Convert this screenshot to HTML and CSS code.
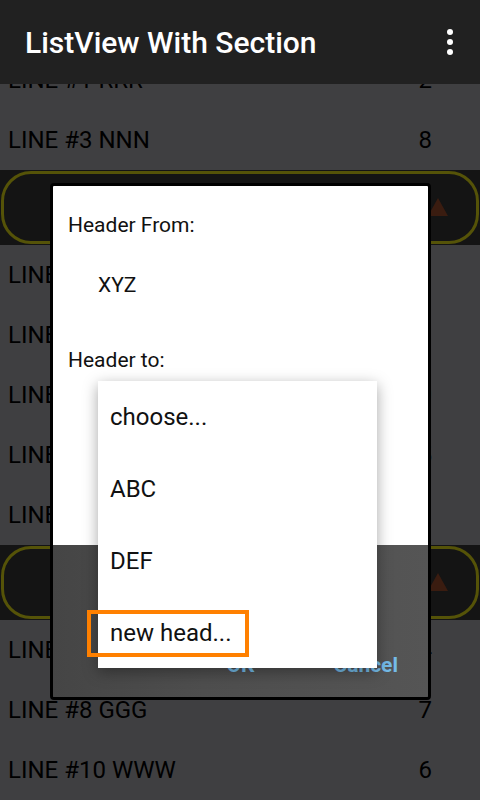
FILE: index.html
```html
<!DOCTYPE html>
<html>
<head>
<meta charset="utf-8">
<link rel="stylesheet" href="styles.css">
</head>
<body>
<div class="screen">
  <header class="appbar">
    <div class="title">ListView With Section</div>
    <div class="overflow"><span></span><span></span><span></span></div>
  </header>
  <div class="list">
    <div class="list-inner">
      <div class="row"><span>LINE #1 RRR</span><span>2</span></div>
      <div class="row"><span>LINE #3 NNN</span><span>8</span></div>
      <div class="section"><div class="pill"><span class="tri"></span></div></div>
      <div class="row"><span>LINE #2 AAA</span><span>1</span></div>
      <div class="row"><span>LINE #4 BBB</span><span>3</span></div>
      <div class="row"><span>LINE #5 CCC</span><span>0</span></div>
      <div class="row"><span>LINE #6 DDD</span><span>5</span></div>
      <div class="row"><span>LINE #9 EEE</span><span>3</span></div>
      <div class="section"><div class="pill"><span class="tri"></span></div></div>
      <div class="row"><span>LINE #7 FFF</span><span>4</span></div>
      <div class="row"><span>LINE #8 GGG</span><span>7</span></div>
      <div class="row"><span>LINE #10 WWW</span><span>6</span></div>
    </div>
  </div>

  <div class="dialog">
    <div class="dialog-body">
      <div class="label first">Header From:</div>
      <div class="value">XYZ</div>
      <div class="label second">Header to:</div>
    </div>
    <div class="dialog-buttons">
      <span class="btn">OK</span>
      <span class="btn">Cancel</span>
    </div>
  </div>

  <div class="popup">
    <div class="item">choose...</div>
    <div class="item">ABC</div>
    <div class="item">DEF</div>
    <div class="item">new head...</div>
  </div>
  <div class="focus-ring"></div>
</div>
</body>
</html>
```

FILE: styles.css
```css
* { box-sizing: border-box; }
html, body {
  margin: 0;
  padding: 0;
  width: 480px;
  height: 800px;
  overflow: hidden;
  font-family: Roboto, "Noto Sans", sans-serif;
}
.screen {
  position: relative;
  width: 480px;
  height: 800px;
  background: #3f3f41;
  display: flex;
  flex-direction: column;
}
.appbar {
  position: relative;
  z-index: 2;
  height: 84px;
  flex: none;
  background: #212121;
  display: flex;
  align-items: center;
  justify-content: space-between;
  padding: 0 27px 0 25px;
}
.title {
  color: #fff;
  font-size: 30px;
  font-weight: 500;
  line-height: 1;
  padding-top: 2px;
}
.overflow {
  display: flex;
  flex-direction: column;
  gap: 4px;
  align-items: center;
}
.overflow span {
  width: 6px;
  height: 6px;
  border-radius: 50%;
  background: #fff;
}
.list {
  flex: 1;
  overflow: hidden;
}
.list-inner {
  margin-top: -34px;
}
.row {
  height: 60px;
  display: flex;
  align-items: center;
  justify-content: space-between;
  padding: 0 48px 0 8px;
  font-size: 24px;
  color: #000;
}
.section {
  height: 75px;
  background: #141414;
  padding: 1px;
}
.pill {
  height: 100%;
  border: 3px solid #555308;
  border-radius: 30px;
  display: flex;
  align-items: center;
  justify-content: flex-end;
  padding-right: 28px;
}
.tri {
  width: 0;
  height: 0;
  border-left: 10px solid transparent;
  border-right: 10px solid transparent;
  border-bottom: 18px solid #3a1c10;
  margin-top: -2px;
}

.dialog {
  position: absolute;
  left: 50px;
  top: 183px;
  width: 381px;
  height: 517px;
  border: 3px solid #000;
  border-radius: 4px;
  display: flex;
  flex-direction: column;
  overflow: hidden;
  z-index: 3;
}
.dialog-body {
  height: 359px;
  background: #fff;
  padding: 27px 15px 0 15px;
  flex: none;
}
.label, .value {
  font-size: 21px;
  line-height: 24px;
  color: #111;
}
.value {
  margin-top: 36px;
  padding-left: 30px;
}
.label.second {
  margin-top: 51px;
}
.dialog-buttons {
  flex: 1;
  background: linear-gradient(90deg, #454545 0%, #4e4e4e 40%, #555555 100%);
  display: flex;
  justify-content: flex-end;
  align-items: flex-end;
  gap: 79px;
  padding: 0 30px 20px 0;
}
.btn {
  color: #74bbe8;
  font-weight: 700;
  font-size: 21px;
  line-height: 24px;
}

.popup {
  position: absolute;
  left: 98px;
  top: 381px;
  width: 279px;
  height: 287px;
  background: #fff;
  box-shadow: 0 4px 14px rgba(0, 0, 0, 0.35);
  z-index: 4;
  display: flex;
  flex-direction: column;
}
.item {
  height: 72px;
  line-height: 72px;
  padding-left: 12px;
  font-size: 24px;
  color: #111;
  flex: none;
}
.focus-ring {
  position: absolute;
  left: 87px;
  top: 610px;
  width: 162px;
  height: 47px;
  border: 4px solid #ff8000;
  z-index: 5;
}
```
